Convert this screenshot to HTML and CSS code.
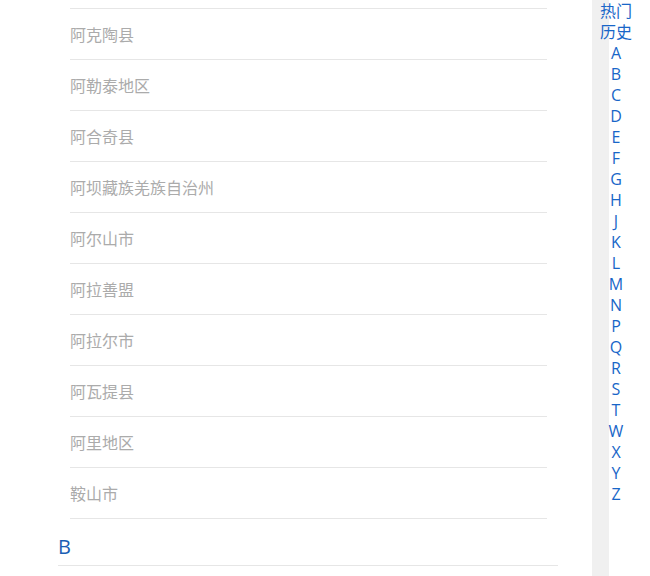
FILE: index.html
```html
<!DOCTYPE html>
<html>
<head>
  <meta charset="utf-8">
  <title>城市选择</title>
  <link rel="stylesheet" href="styles.css">
</head>
<body>

  <div class="page">
    <div class="main">
      <ul class="city-list">
        <li class="city">阿克陶县</li>
        <li class="city">阿勒泰地区</li>
        <li class="city">阿合奇县</li>
        <li class="city">阿坝藏族羌族自治州</li>
        <li class="city">阿尔山市</li>
        <li class="city">阿拉善盟</li>
        <li class="city">阿拉尔市</li>
        <li class="city">阿瓦提县</li>
        <li class="city">阿里地区</li>
        <li class="city">鞍山市</li>
      </ul>
      <div class="group-title">B</div>
    </div>

    <div class="side">
      <ul class="index">
        <li>热门</li>
        <li>历史</li>
        <li>A</li>
        <li>B</li>
        <li>C</li>
        <li>D</li>
        <li>E</li>
        <li>F</li>
        <li>G</li>
        <li>H</li>
        <li>J</li>
        <li>K</li>
        <li>L</li>
        <li>M</li>
        <li>N</li>
        <li>P</li>
        <li>Q</li>
        <li>R</li>
        <li>S</li>
        <li>T</li>
        <li>W</li>
        <li>X</li>
        <li>Y</li>
        <li>Z</li>
      </ul>
    </div>
  </div>

</body>
</html>
```

FILE: styles.css
```css
body {
  margin: 0;
  padding: 0;
  background-color: white;
  font-family: 'Open Sans', 'Noto Sans CJK SC', sans-serif;
  overflow: hidden;
}

ul {
  list-style: none;
  margin: 0;
  padding: 0;
}

.page {
  display: flex;
  height: 576px;
}

/* City list */
.main {
  width: 592px;
  flex-shrink: 0;
}

.city-list {
  margin: 8px 45px 0 70px;
  border-top: 1px solid #e6e6e6;
}

.city {
  height: 50px;
  line-height: 50px;
  border-bottom: 1px solid #e6e6e6;
  color: #ababab;
  font-size: 16px;
  font-family: 'Noto Sans CJK SC', sans-serif;
}

.group-title {
  margin: 0 34px 0 58px;
  padding-top: 10px;
  height: 36px;
  line-height: 36px;
  border-bottom: 1px solid #e6e6e6;
  color: #1b5fb4;
  font-size: 20px;
}

/* Letter index */
.side {
  flex: 1;
  background: linear-gradient(to right, #f0f0f0 17px, white 17px);
}

.index {
  width: 32px;
  margin-left: 8px;
  padding-top: 1px;
  text-align: center;
}

.index li {
  height: 21px;
  line-height: 21px;
  color: #1866c8;
  font-size: 16px;
}
```
